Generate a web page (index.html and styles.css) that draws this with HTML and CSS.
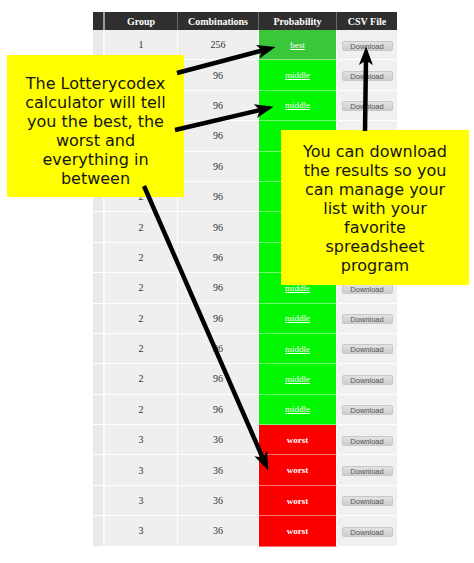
FILE: index.html
```html
<!DOCTYPE html>
<html>
<head>
<meta charset="utf-8">
<link rel="stylesheet" href="styles.css">
</head>
<body>
<div class="page">
  <table class="results">
    <thead>
      <tr>
        <th class="strip"></th>
        <th class="c-group">Group</th>
        <th class="c-comb">Combinations</th>
        <th class="c-prob">Probability</th>
        <th class="c-csv">CSV File</th>
      </tr>
    </thead>
    <tbody>
      <tr><td class="strip"></td><td>1</td><td>256</td><td class="prob best"><a>best</a></td><td class="csv"><span class="btn">Download</span></td></tr>
      <tr><td class="strip"></td><td>2</td><td>96</td><td class="prob middle"><a>middle</a></td><td class="csv"><span class="btn">Download</span></td></tr>
      <tr><td class="strip"></td><td>2</td><td>96</td><td class="prob middle"><a>middle</a></td><td class="csv"><span class="btn">Download</span></td></tr>
      <tr><td class="strip"></td><td>2</td><td>96</td><td class="prob middle"><a>middle</a></td><td class="csv"><span class="btn">Download</span></td></tr>
      <tr><td class="strip"></td><td>2</td><td>96</td><td class="prob middle"><a>middle</a></td><td class="csv"><span class="btn">Download</span></td></tr>
      <tr><td class="strip"></td><td>2</td><td>96</td><td class="prob middle"><a>middle</a></td><td class="csv"><span class="btn">Download</span></td></tr>
      <tr><td class="strip"></td><td>2</td><td>96</td><td class="prob middle"><a>middle</a></td><td class="csv"><span class="btn">Download</span></td></tr>
      <tr><td class="strip"></td><td>2</td><td>96</td><td class="prob middle"><a>middle</a></td><td class="csv"><span class="btn">Download</span></td></tr>
      <tr><td class="strip"></td><td>2</td><td>96</td><td class="prob middle"><a>middle</a></td><td class="csv"><span class="btn">Download</span></td></tr>
      <tr><td class="strip"></td><td>2</td><td>96</td><td class="prob middle"><a>middle</a></td><td class="csv"><span class="btn">Download</span></td></tr>
      <tr><td class="strip"></td><td>2</td><td>96</td><td class="prob middle"><a>middle</a></td><td class="csv"><span class="btn">Download</span></td></tr>
      <tr><td class="strip"></td><td>2</td><td>96</td><td class="prob middle"><a>middle</a></td><td class="csv"><span class="btn">Download</span></td></tr>
      <tr><td class="strip"></td><td>2</td><td>96</td><td class="prob middle"><a>middle</a></td><td class="csv"><span class="btn">Download</span></td></tr>
      <tr><td class="strip"></td><td>3</td><td>36</td><td class="prob worst"><a>worst</a></td><td class="csv"><span class="btn">Download</span></td></tr>
      <tr><td class="strip"></td><td>3</td><td>36</td><td class="prob worst"><a>worst</a></td><td class="csv"><span class="btn">Download</span></td></tr>
      <tr><td class="strip"></td><td>3</td><td>36</td><td class="prob worst"><a>worst</a></td><td class="csv"><span class="btn">Download</span></td></tr>
      <tr><td class="strip"></td><td>3</td><td>36</td><td class="prob worst"><a>worst</a></td><td class="csv"><span class="btn">Download</span></td></tr>
    </tbody>
  </table>

  <div class="note note-left">The Lotterycodex<br>calculator will tell<br>you the best, the<br>worst and<br>everything in<br>between</div>
  <div class="note note-right">You can download<br>the results so you<br>can manage your<br>list with your<br>favorite<br>spreadsheet<br>program</div>

  <svg class="arrows" width="474" height="563" viewBox="0 0 474 563">
    <defs>
      <marker id="head" markerUnits="userSpaceOnUse" markerWidth="19" markerHeight="15" viewBox="0 0 19 15" refX="7" refY="7.5" orient="auto">
        <path d="M0,0.5 L18.5,7.5 L0,14.5 L4.5,7.5 Z" fill="#000"/>
      </marker>
    </defs>
    <line x1="177" y1="73" x2="264.4" y2="49.9" stroke="#000" stroke-width="4.5" marker-end="url(#head)"/>
    <line x1="175" y1="130" x2="262.3" y2="109.5" stroke="#000" stroke-width="4.5" marker-end="url(#head)"/>
    <line x1="144" y1="186" x2="263.6" y2="459.9" stroke="#000" stroke-width="4.5" marker-end="url(#head)"/>
    <line x1="365" y1="131" x2="366" y2="58" stroke="#000" stroke-width="4.5" marker-end="url(#head)"/>
  </svg>
</div>
</body>
</html>
```

FILE: styles.css
```css
* { box-sizing: border-box; }
html, body { margin: 0; padding: 0; background: #fff; }
.page {
  position: relative;
  width: 474px;
  height: 563px;
  overflow: hidden;
  padding: 12px 0 0 93px;
}
.results {
  border-collapse: separate;
  border-spacing: 0;
  table-layout: fixed;
  width: 304px;
  font-family: "Liberation Serif", "Times New Roman", serif;
}
.results th {
  height: 18px;
  padding: 0;
  background: #2f2f2f;
  color: #fff;
  font-weight: bold;
  font-size: 10px;
  text-align: center;
  border-right: 1px solid #6a6a6a;
  white-space: nowrap;
  overflow: hidden;
}
.results th.strip { width: 12px; border-right: 2px solid #9a9a9a; }
.results th.c-group { width: 73px; }
.results th.c-comb { width: 81px; }
.results th.c-prob { width: 78px; }
.results th.c-csv { width: 60px; border-right: 0; }
.results td {
  height: 30.4px;
  padding: 0;
  background: #efefef;
  color: #333;
  font-size: 10px;
  text-align: center;
  border-right: 1px solid #fff;
  border-bottom: 1px solid #fff;
}
.results td.strip { background: #e9e9e9; border-right: 2px solid #fafafa; }
.results td.csv { border-right: 0; background: #f0f0f0; }
.results td.prob { color: #fff; font-size: 9px; border-bottom-color: rgba(255,255,255,0.45); }
.prob a { color: #fff; text-decoration: underline; }
.prob.best { background: #3ac73a; }
.prob.middle { background: #02f702; }
.prob.worst { background: #fc0000; }
.prob.worst a { text-decoration: none; font-weight: bold; }
.btn {
  display: inline-block;
  width: 51px;
  height: 10px;
  line-height: 9px;
  border-radius: 2px;
  background: linear-gradient(#e2e2e2, #cdcdcd);
  border: 1px solid #c8c8c8;
  color: #555;
  font-family: "Liberation Sans", Arial, sans-serif;
  font-size: 7.5px;
  vertical-align: middle;
}
.note {
  position: absolute;
  background: #ffff00;
  color: #151515;
  font-family: "DejaVu Sans", Verdana, sans-serif;
  font-size: 16px;
  line-height: 19px;
  text-align: center;
}
.note-left { left: 7px; top: 55px; width: 177px; height: 142px; padding-top: 18.5px; }
.note-right { left: 281px; top: 130px; width: 188px; height: 155px; padding-top: 11.5px; }
.arrows { position: absolute; left: 0; top: 0; pointer-events: none; }
```
